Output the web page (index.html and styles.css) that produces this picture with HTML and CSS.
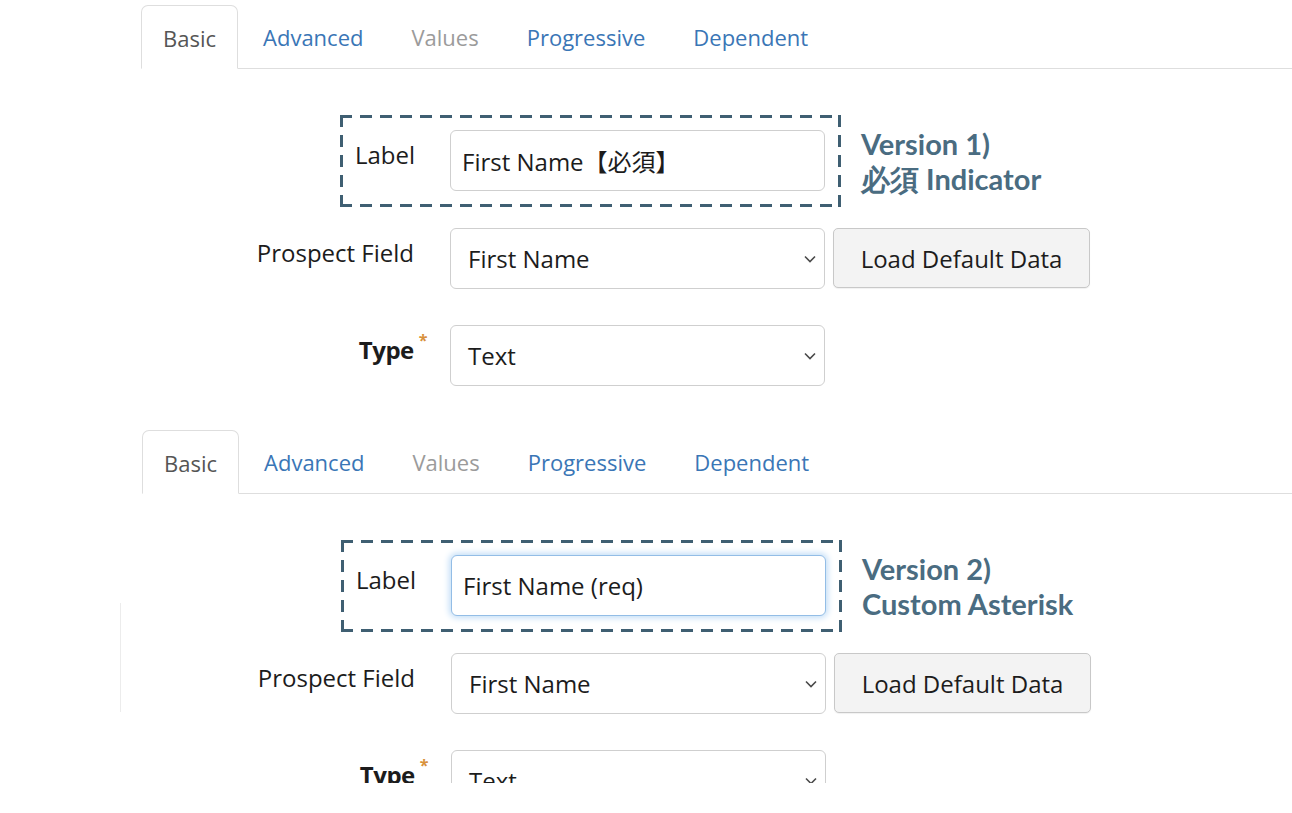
FILE: index.html
```html
<!DOCTYPE html>
<html lang="en">
<head>
    <meta charset="UTF-8">
    <title>Required Field Indicator Versions</title>
    <link rel="stylesheet" href="styles.css">
</head>
<body>
    <div class="panel">
        <ul class="tabs">
            <li class="tab active">Basic</li>
            <li class="tab">Advanced</li>
            <li class="tab disabled">Values</li>
            <li class="tab">Progressive</li>
            <li class="tab">Dependent</li>
        </ul>

        <div class="form">
            <div class="row boxed-row">
                <div class="dashed-box">
                    <label class="field-label short">Label</label>
                    <input class="text-input" type="text" value="First Name【必須】">
                </div>
                <div class="note">Version 1)<br>必須 Indicator</div>
            </div>

            <div class="row">
                <label class="field-label">Prospect Field</label>
                <div class="select">
                    <span>First Name</span>
                    <svg class="chevron" width="12" height="8" viewBox="0 0 12 8"><path d="M1 1.5 L6 6.5 L11 1.5" fill="none" stroke="#4a4a4a" stroke-width="1.6"/></svg>
                </div>
                <button class="btn">Load Default Data</button>
            </div>

            <div class="row">
                <label class="field-label bold">Type<span class="req">*</span></label>
                <div class="select">
                    <span>Text</span>
                    <svg class="chevron" width="12" height="8" viewBox="0 0 12 8"><path d="M1 1.5 L6 6.5 L11 1.5" fill="none" stroke="#4a4a4a" stroke-width="1.6"/></svg>
                </div>
            </div>
        </div>
    </div>

    <div class="panel second">
        <ul class="tabs">
            <li class="tab active">Basic</li>
            <li class="tab">Advanced</li>
            <li class="tab disabled">Values</li>
            <li class="tab">Progressive</li>
            <li class="tab">Dependent</li>
        </ul>

        <div class="form">
            <div class="row boxed-row">
                <div class="dashed-box">
                    <label class="field-label short">Label</label>
                    <input class="text-input focused" type="text" value="First Name (req)">
                </div>
                <div class="note">Version 2)<br>Custom Asterisk</div>
            </div>

            <div class="row">
                <label class="field-label">Prospect Field</label>
                <div class="select">
                    <span>First Name</span>
                    <svg class="chevron" width="12" height="8" viewBox="0 0 12 8"><path d="M1 1.5 L6 6.5 L11 1.5" fill="none" stroke="#4a4a4a" stroke-width="1.6"/></svg>
                </div>
                <button class="btn">Load Default Data</button>
            </div>

            <div class="row">
                <label class="field-label bold">Type<span class="req">*</span></label>
                <div class="select">
                    <span>Text</span>
                    <svg class="chevron" width="12" height="8" viewBox="0 0 12 8"><path d="M1 1.5 L6 6.5 L11 1.5" fill="none" stroke="#4a4a4a" stroke-width="1.6"/></svg>
                </div>
            </div>
        </div>
    </div>
</body>
</html>
```

FILE: styles.css
```css
body {
    margin: 0;
    background: #fff;
    font-family: "Open Sans", "Noto Sans CJK JP", sans-serif;
    color: #1c1c1c;
    overflow: hidden;
}

.panel {
    padding-top: 5px;
    height: 425px;
}

.panel.second {
    position: relative;
    padding-top: 0;
    padding-left: 1px;
    height: 353px;
    overflow: hidden;
}

/* faint leftover edge from the second screenshot */
.panel.second::before {
    content: "";
    position: absolute;
    left: 120px;
    top: 173px;
    height: 109px;
    border-left: 1px solid #ececec;
}

.tabs {
    display: flex;
    list-style: none;
    margin: 0 0 0 141px;
    padding: 0;
    border-bottom: 1px solid #dedede;
}

.tab {
    height: 60px;
    padding: 2px 24px 0;
    line-height: 60px;
    font-size: 22px;
    color: #3a76b6;
}

.tab.active {
    padding: 2px 21px 0;
    color: #555;
    background: #fff;
    border: 1px solid #dedede;
    border-bottom: 1px solid #fff;
    border-radius: 7px 7px 0 0;
    margin-bottom: -1px;
}

.tab.active + .tab {
    padding-left: 25px;
}

.tab.disabled {
    color: #9b9b9b;
}

.form {
    padding-left: 254px;
}

.row {
    display: flex;
    align-items: flex-start;
    margin-top: 36px;
}

.boxed-row {
    margin-top: 46px;
    margin-left: 86px;
    margin-bottom: -15px;
}

.dashed-box {
    display: flex;
    align-items: flex-start;
    padding: 15px 16px 16px 15px;
    background:
        linear-gradient(90deg, #3f5f72 12px, transparent 12px) top left / 20px 3px repeat-x,
        linear-gradient(90deg, #3f5f72 12px, transparent 12px) bottom left / 20px 3px repeat-x,
        linear-gradient(180deg, #3f5f72 12px, transparent 12px) top left / 3px 20px repeat-y,
        linear-gradient(180deg, #3f5f72 12px, transparent 12px) top right / 3px 20px repeat-y;
}

.field-label {
    width: 160px;
    margin-right: 36px;
    padding-top: 10px;
    line-height: 30px;
    font-size: 24px;
    text-align: right;
    white-space: nowrap;
}

.field-label.short {
    width: 59px;
}

.field-label.bold {
    font-weight: 700;
    letter-spacing: -0.5px;
}

.req {
    color: #d8913b;
    font-size: 16px;
    font-weight: 700;
    line-height: 0;
    vertical-align: 13px;
    margin-left: 5px;
    margin-right: -13px;
}

.text-input {
    box-sizing: border-box;
    width: 375px;
    height: 61px;
    margin: 0;
    padding: 0 11px;
    border: 1px solid #cfcfcf;
    border-radius: 6px;
    font-family: inherit;
    font-size: 24px;
    color: #1c1c1c;
    outline: none;
}

.text-input.focused {
    border-color: #93bde6;
    box-shadow: 0 0 6px 2px #c3def7;
}

.select {
    box-sizing: border-box;
    display: flex;
    align-items: center;
    justify-content: space-between;
    width: 375px;
    height: 61px;
    padding: 0 8px 0 17px;
    border: 1px solid #cfcfcf;
    border-radius: 6px;
    font-size: 24px;
}

.chevron {
    display: block;
}

.btn {
    box-sizing: border-box;
    height: 60px;
    width: 257px;
    margin-left: 8px;
    border: 1px solid #c8c8c8;
    border-radius: 5px;
    background: #f3f3f3;
    font-family: inherit;
    font-size: 24px;
    color: #1c1c1c;
    box-shadow: 0 1px 1px rgba(0,0,0,0.06);
}

.note {
    margin-left: 20px;
    padding-top: 11px;
    font-family: Lato, sans-serif;
    font-weight: 700;
    font-size: 29px;
    line-height: 35px;
    color: #4a6c81;
    white-space: nowrap;
}
```
